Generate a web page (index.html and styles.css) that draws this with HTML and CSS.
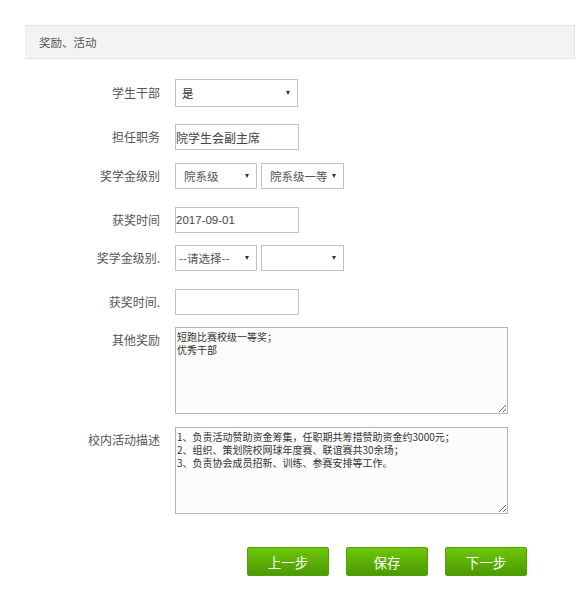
FILE: index.html
```html
<!DOCTYPE html>
<html lang="zh-CN">
<head>
<meta charset="utf-8">
<title>奖励、活动</title>
<link rel="stylesheet" href="styles.css">
</head>
<body>
<div class="panel-head">奖励、活动</div>
<form class="form">
  <div class="row r1">
    <label class="lbl">学生干部</label>
    <div class="sel w123"><span>是</span><i class="arr"></i></div>
  </div>
  <div class="row r2">
    <label class="lbl">担任职务</label>
    <input class="inp" type="text" value="院学生会副主席">
  </div>
  <div class="row r3">
    <label class="lbl">奖学金级别</label>
    <div class="sels">
      <div class="sel w82"><span class="gray">院系级</span><i class="arr"></i></div>
      <div class="sel w83"><span class="gray">院系级一等</span><i class="arr"></i></div>
    </div>
  </div>
  <div class="row r4">
    <label class="lbl">获奖时间</label>
    <input class="inp num" type="text" value="2017-09-01">
  </div>
  <div class="row r5">
    <label class="lbl">奖学金级别.</label>
    <div class="sels">
      <div class="sel w82 tight"><span class="gray">--请选择--</span><i class="arr"></i></div>
      <div class="sel w83"><span></span><i class="arr"></i></div>
    </div>
  </div>
  <div class="row r6">
    <label class="lbl">获奖时间.</label>
    <input class="inp" type="text" value="">
  </div>
  <div class="row r7 top">
    <label class="lbl">其他奖励</label>
    <textarea class="ta">短跑比赛校级一等奖；
优秀干部</textarea>
  </div>
  <div class="row r8 top">
    <label class="lbl">校内活动描述</label>
    <textarea class="ta">1、负责活动赞助资金筹集，任职期共筹措赞助资金约3000元；
2、组织、策划院校网球年度赛、联谊赛共30余场；
3、负责协会成员招新、训练、参赛安排等工作。</textarea>
  </div>
  <div class="btns">
    <button type="button" class="btn">上一步</button>
    <button type="button" class="btn">保存</button>
    <button type="button" class="btn">下一步</button>
  </div>
</form>
</body>
</html>
```

FILE: styles.css
```css
html, body {
  margin: 0;
  padding: 0;
  background: #ffffff;
}
body {
  font-family: "Noto Sans CJK SC", "Liberation Sans", sans-serif;
  color: #333333;
  font-size: 12px;
}
.panel-head {
  margin: 25px 11px 0 25px;
  height: 32px;
  line-height: 32px;
  border: 1px solid #e2e2e2;
  border-left-color: #f0f0f0;
  background: #f3f3f3;
  padding-left: 13px;
  font-size: 11.5px;
  color: #555555;
}
.form {
  display: flex;
  flex-direction: column;
  margin: 0;
}
.row {
  display: flex;
  align-items: center;
  gap: 15px;
}
.row.top {
  align-items: flex-start;
}
.r1 { margin-top: 20px; }
.r2 { margin-top: 17px; }
.r3 { margin-top: 13px; }
.r4 { margin-top: 18px; }
.r5 { margin-top: 12px; }
.r6 { margin-top: 18px; }
.r7 { margin-top: 12px; }
.r8 { margin-top: 13px; }
.lbl {
  width: 160px;
  flex: none;
  text-align: right;
  font-size: 12px;
  color: #555555;
  line-height: 16px;
}
.row.top .lbl {
  line-height: 26px;
}
.sels {
  display: flex;
  gap: 4px;
}
.sel {
  box-sizing: border-box;
  height: 26px;
  border: 1px solid #c2c2c2;
  background: #ffffff;
  display: flex;
  align-items: center;
  justify-content: space-between;
  padding: 0 7px 0 8px;
  font-size: 11.5px;
  color: #333333;
}
.r1 .sel { height: 28px; padding-left: 6px; }
.sel.tight { padding-left: 3px; }
.sel .gray { color: #555555; }
.w123 { width: 123px; }
.w82 { width: 82px; }
.w83 { width: 83px; }
.arr {
  width: 0;
  height: 0;
  border-left: 2px solid transparent;
  border-right: 2px solid transparent;
  border-top: 4px solid #333333;
}
.inp {
  box-sizing: border-box;
  width: 124px;
  height: 26px;
  margin: 0;
  padding: 0;
  border: 1px solid #c2c2c2;
  background: #ffffff;
  font-family: "Noto Sans CJK SC", "Liberation Sans", sans-serif;
  font-size: 12px;
  color: #444444;
  outline: none;
}
.inp.num {
  font-family: "Liberation Sans", "Noto Sans CJK SC", sans-serif;
  font-size: 11.5px;
}
.ta {
  box-sizing: border-box;
  width: 333px;
  height: 87px;
  margin: 0;
  padding: 2px 1px;
  border: 1px solid #b5b5b5;
  background: #fcfcfc;
  font-family: "Noto Sans CJK SC", "Liberation Sans", sans-serif;
  font-size: 10px;
  line-height: 13px;
  color: #333333;
  resize: both;
  outline: none;
}
.btns {
  display: flex;
  gap: 17px;
  margin: 33px 0 0 247px;
}
.btn {
  width: 82px;
  height: 29px;
  border: 1px solid #52a006;
  border-radius: 2px;
  background: linear-gradient(to bottom, #6ec70c 0%, #5cb005 50%, #4b9a03 100%);
  color: #ffffff;
  font-family: "Noto Sans CJK SC", "Liberation Sans", sans-serif;
  font-size: 13.5px;
  padding: 0;
  cursor: pointer;
}
```
